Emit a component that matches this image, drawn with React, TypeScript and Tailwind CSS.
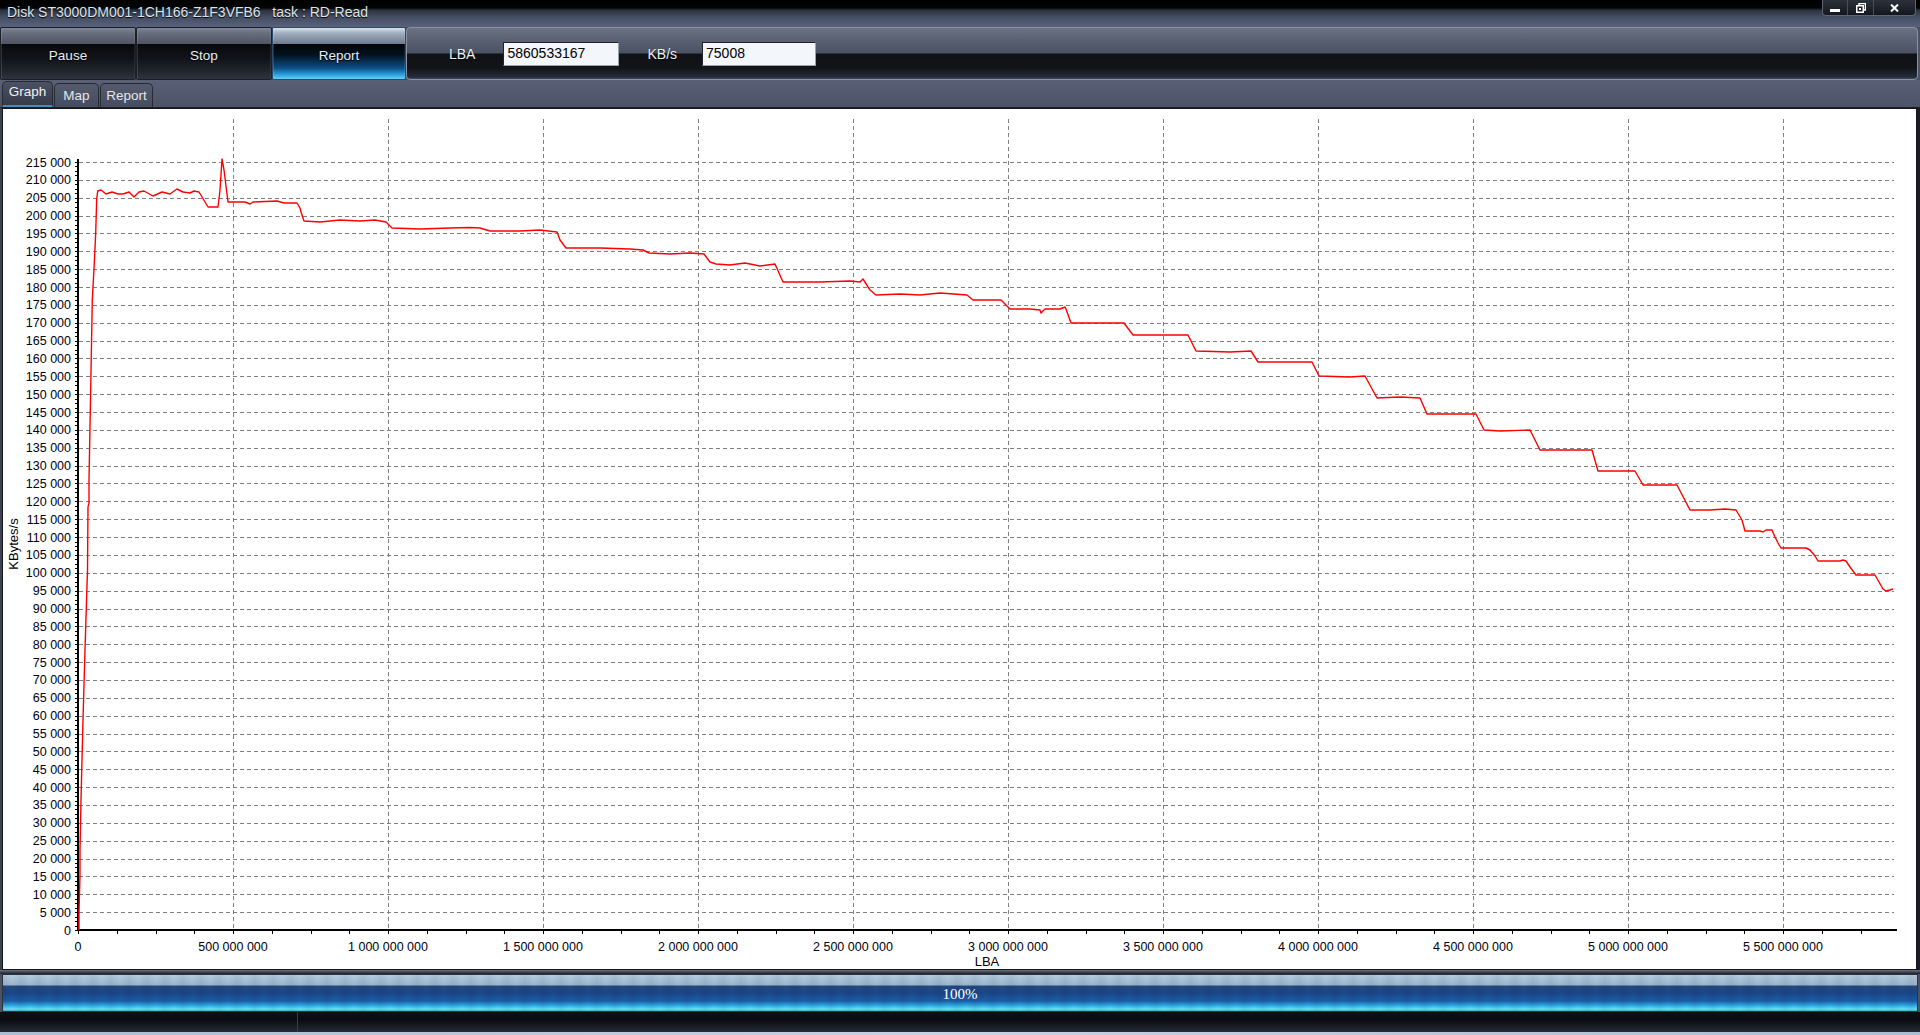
import React from "react";

const LINE: [number, number][] = [
  [79, 930], [79, 912], [80, 875], [80, 850], [81, 800], [83, 720], [85, 650], [87, 585], [87.5, 572], [88, 507], [89, 503], [89, 480], [90.5, 400], [92.3, 300], [94.3, 263], [95.7, 233], [96.7, 199], [97.7, 191],
  [101, 190], [106, 194], [112, 192], [118, 194], [123, 194], [129, 192], [134, 197], [139, 192], [144, 191], [153, 196], [162, 192], [170, 194], [177, 189], [183, 192], [190, 193], [194, 191], [199, 192], [208, 207], [218, 207], [220, 190], [222, 159], [224, 170], [228, 202], [233, 202], [245, 202], [250, 204], [253, 202], [277, 201], [284, 203], [297, 203], [300, 208],
  [301, 212], [304, 221], [320, 222], [340, 220], [360, 221], [375, 220], [386, 222],
  [392, 228], [420, 229], [450, 228], [470, 227.5], [480, 228], [490, 231], [520, 231], [540, 230], [557, 232],
  [560, 240], [566, 248], [600, 248], [630, 249], [643, 250],
  [649, 253], [670, 254], [690, 253], [704, 254],
  [710, 262], [716, 264], [730, 265], [745, 263], [760, 266], [775, 264],
  [783, 282], [820, 282], [850, 281], [860, 282], [863, 279],
  [870, 290], [876, 295], [900, 294], [920, 295], [940, 293], [967, 295],
  [973, 300], [1001, 300],
  [1010, 309], [1030, 309], [1040, 310], [1041, 313], [1045, 309], [1060, 309], [1065, 307], [1066, 309],
  [1071, 323], [1124, 323],
  [1133, 335], [1188, 335],
  [1196, 351], [1230, 352], [1251, 351],
  [1258, 362], [1312, 362],
  [1319, 376], [1350, 377], [1365, 376],
  [1377, 398], [1400, 397], [1420, 398],
  [1427, 414], [1470, 414], [1476, 414],
  [1484, 430], [1500, 431], [1530, 430],
  [1540, 450], [1592, 450],
  [1598, 471], [1635, 471],
  [1643, 485], [1677, 485],
  [1690, 510], [1710, 510], [1725, 509], [1736, 510],
  [1742, 520], [1745, 531], [1760, 531], [1763, 532], [1766, 530], [1772, 530], [1775, 537], [1778, 543], [1781, 548], [1806, 548], [1810, 550], [1815, 556], [1818, 561], [1840, 561], [1843, 560], [1846, 561], [1850, 567], [1856, 575], [1875, 575], [1879, 582], [1883, 589], [1886, 591], [1890, 590], [1893, 589],
];

const yOf = (v: number) => 930 - (v * 768) / 215000;
const fmt = (n: number) => String(n).replace(/\B(?=(\d{3})+(?!\d))/g, " ");

function Chart() {
  const yVals = Array.from({ length: 44 }, (_, i) => i * 5000);
  const gridX = Array.from({ length: 11 }, (_, i) => 78 + (i + 1) * 155);
  const xLabels = Array.from({ length: 12 }, (_, i) => i);
  const minorX = Array.from({ length: 47 }, (_, i) => 78 + i * 38.75);
  const minorY = Array.from({ length: 173 }, (_, i) => yOf(i * 1250));
  return (
    <svg
      width={1913}
      height={860}
      viewBox="3 109 1913 860"
      className="block font-['Liberation_Sans',Arial,sans-serif]"
    >
      {yVals.slice(1).map((v) => {
        const y = Math.round(yOf(v)) + 0.5;
        return (
          <line key={"h" + v} x1={79} x2={1894} y1={y} y2={y} stroke="#808080" strokeWidth={1} strokeDasharray="4 3" />
        );
      })}
      {gridX.map((x) => {
        const xx = Math.round(x) + 0.5;
        return <line key={"v" + x} x1={xx} x2={xx} y1={119} y2={934} stroke="#808080" strokeWidth={1} strokeDasharray="4 3" />;
      })}
      {minorY.map((y, i) => (
        <line key={"my" + i} x1={75} x2={78} y1={Math.round(y) + 0.5} y2={Math.round(y) + 0.5} stroke="#000" strokeWidth={1} />
      ))}
      {minorX.map((x, i) => (
        <line key={"mx" + i} x1={Math.round(x) + 0.5} x2={Math.round(x) + 0.5} y1={930} y2={934} stroke="#000" strokeWidth={1} />
      ))}
      <line x1={78} x2={78} y1={159} y2={931} stroke="#000" strokeWidth={2} />
      <line x1={77} x2={1897} y1={930} y2={930} stroke="#000" strokeWidth={2} />
      {yVals.map((v) => (
        <text key={"yl" + v} x={71} y={yOf(v) + 4.5} textAnchor="end" fontSize={12.5} fill="#000010">
          {v === 0 ? "0" : `${v / 1000} 000`}
        </text>
      ))}
      {xLabels.map((i) => (
        <text key={"xl" + i} x={78 + i * 155} y={951} textAnchor="middle" fontSize={12.5} fill="#000010">
          {fmt(i * 500000000)}
        </text>
      ))}
      <text x={987} y={966} textAnchor="middle" fontSize={13} fill="#000">
        LBA
      </text>
      <text x={18} y={544} textAnchor="middle" fontSize={13} fill="#000" transform="rotate(-90 18 544)">
        KBytes/s
      </text>
      <polyline
        points={LINE.map((p) => p.join(",")).join(" ")}
        fill="none"
        stroke="#ff0000"
        strokeWidth={1.4}
        strokeLinejoin="round"
      />
    </svg>
  );
}

function ToolButton({ label, active, w }: { label: string; active?: boolean; w: string }) {
  return (
    <div
      className={
        (active
          ? "bg-[linear-gradient(180deg,#dbe3ec_0px,#a2afbf_5px,#6a7a8e_16px,#000408_16px,#03121f_27px,#0b4e86_40px,#35b0ea_48px,#6ccdf4_51px)] border-[#284a66] "
          : "bg-[linear-gradient(180deg,#80869a_0px,#686e7e_5px,#4e5462_16px,#08090c_16px,#101318_30px,#22272f_44px,#2e343f_51px)] border-[#1b1e25] ") +
        w +
        " h-[53px] border rounded-[2px] flex justify-center items-start pt-[20px] shadow-[inset_1px_0_0_rgba(255,255,255,0.14),inset_-1px_0_0_rgba(255,255,255,0.08)]"
      }
    >
      <span className="text-[13.5px] leading-[16px] text-[#e9edf2] [text-shadow:0_1px_1px_#000]">{label}</span>
    </div>
  );
}

function Tab({ label, active, w }: { label: string; active?: boolean; w: string }) {
  return (
    <div
      className={
        (active
          ? "h-[26px] bg-[linear-gradient(180deg,#4b5264,#363b49)] border-b-2 border-b-[#3f8fc4] text-[#eef1f6] pt-[2px] "
          : "h-[24px] bg-[linear-gradient(180deg,#545b6e,#474d60)] text-[#e2e6ec] pt-[4px] ") +
        w +
        " rounded-t-[5px] border-t border-l border-r border-[#262a33] flex justify-center text-[13.5px] leading-[16px] mr-[1px]"
      }
    >
      {label}
    </div>
  );
}

export default function App() {
  return (
    <div className="w-[1920px] h-[1035px] overflow-hidden flex flex-col bg-[#4b5266] font-['Liberation_Sans',Arial,sans-serif]">
      <div className="h-[27px] flex justify-between bg-[linear-gradient(180deg,#000_0px,#030405_8px,#2a303d_10px,#454d62_17px,#59627c_27px)]">
        <div className="pl-[7px] pt-[4px] text-[14px] leading-[16px] text-[#dfe3ea] whitespace-pre [text-shadow:0_1px_1px_#000]">
          {"Disk ST3000DM001-1CH166-Z1F3VFB6   task : RD-Read"}
        </div>
        <div className="flex self-start h-[16px] mr-[4px] border border-t-0 border-[#5e6576] rounded-b-[4px] overflow-hidden bg-[linear-gradient(180deg,#2c313c,#14171d)]">
          <div className="w-[25px] border-r border-[#4a5060] flex items-end justify-center pb-[3px]">
            <div className="w-[10px] h-[3px] bg-white" />
          </div>
          <div className="w-[26px] border-r border-[#4a5060] flex items-center justify-center">
            <svg width="10" height="10" viewBox="0 0 10 10">
              <rect x="3" y="0.5" width="6.5" height="6.5" fill="none" stroke="#fff" strokeWidth="1.5" />
              <rect x="0.75" y="2.75" width="6.5" height="6.5" fill="#1c1f26" stroke="#fff" strokeWidth="1.5" />
              <rect x="3" y="5" width="2" height="2" fill="#fff" />
            </svg>
          </div>
          <div className="w-[41px] flex items-center justify-center">
            <svg width="9" height="8" viewBox="0 0 9 8">
              <path d="M1 0.5 L8 7.5 M8 0.5 L1 7.5" stroke="#fff" strokeWidth="2" />
            </svg>
          </div>
        </div>
      </div>

      <div className="h-[53px] flex">
        <ToolButton label="Pause" w="w-[136px]" />
        <ToolButton label="Stop" w="w-[136px]" />
        <ToolButton label="Report" w="w-[134px]" active />
        <div className="flex-1 mr-[2px] h-[53px] rounded-[4px] border border-[#8a91a2] flex items-center pl-[42px] text-[14px] bg-[linear-gradient(180deg,#6a7284_0px,#5a6173_12px,#4b5263_25px,#0f1115_26px,#121418_40px,#262b38_49px,#4c5c84_52px)]">
          <span className="text-[#eef1f5] [text-shadow:0_1px_1px_#000] leading-[16px]">LBA</span>
          <div className="ml-[28px] w-[116px] h-[24px] bg-[#f3f6fb] border-t border-l border-[#1e222b] border-r border-b border-r-[#9aa2b2] border-b-[#9aa2b2] pl-[3px] flex items-center text-[14px] text-black">
            5860533167
          </div>
          <span className="ml-[28px] text-[#eef1f5] [text-shadow:0_1px_1px_#000] leading-[16px]">KB/s</span>
          <div className="ml-[25px] w-[114px] h-[24px] bg-[#f3f6fb] border-t border-l border-[#1e222b] border-r border-b border-r-[#9aa2b2] border-b-[#9aa2b2] pl-[3px] flex items-center text-[14px] text-black">
            75008
          </div>
        </div>
      </div>

      <div className="h-[28px] flex items-end pl-[2px] border-b border-[#1d2027] bg-[linear-gradient(180deg,#5a6176,#4c5367)]">
        <Tab label="Graph" w="w-[51px]" active />
        <Tab label="Map" w="w-[45px]" />
        <Tab label="Report" w="w-[53px]" />
      </div>

      <div className="h-[862px] flex bg-[#2a2e38]">
        <div className="w-[2px] bg-[#3c4252]" />
        <div className="w-[1915px] h-[862px] border border-[#15171c] bg-white overflow-hidden">
          <Chart />
        </div>
        <div className="flex-1 bg-[#1a1d24]" />
      </div>

      <div className="h-[4px] bg-[linear-gradient(180deg,#6b7282,#1c1f26)]" />

      <div className="h-[38px] mx-[2px] border border-[#2a3440] flex items-center justify-center bg-[image:repeating-linear-gradient(90deg,rgba(0,10,40,0.07)_0px,rgba(0,0,0,0)_9px,rgba(0,10,40,0.07)_18px),linear-gradient(180deg,#b6cde0_0px,#9cb6cc_10px,#234a80_11px,#1b4689_18px,#1c5ea8_26px,#2fb4ea_31px,#6ee0f8_34px,#48b0d4_36px)]">
        <span className="font-['Liberation_Serif',serif] text-[15px] leading-[16px] text-white pt-[2px]">100%</span>
      </div>

      <div className="h-[20px] flex bg-[linear-gradient(180deg,#0e1014,#0b0c0f_40%,#252a36)]">
        <div className="w-[298px] border-r border-[#383d4a]" />
        <div className="flex-1" />
      </div>
      <div className="h-[3px] bg-[linear-gradient(90deg,#a9bdd5,#c4d2e4_50%,#a9bdd5)]" />
    </div>
  );
}
